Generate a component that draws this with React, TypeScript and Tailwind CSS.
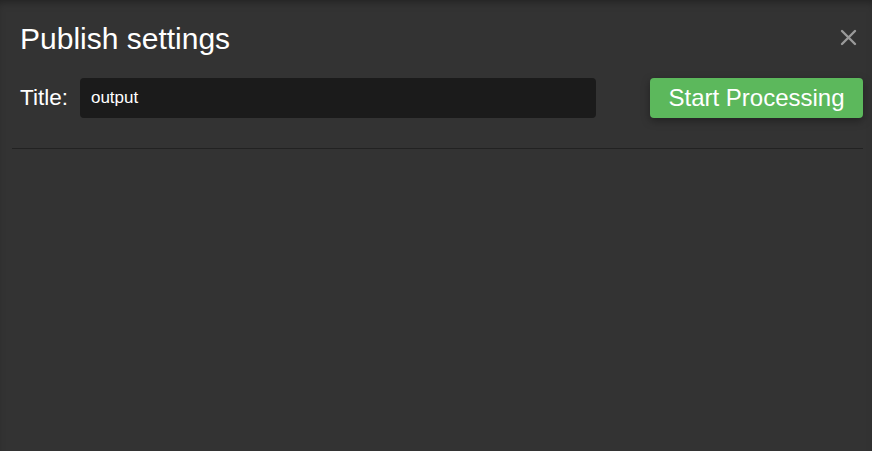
export default function App() {
  return (
    <div
      className="h-[451px] w-[872px] overflow-hidden bg-[#333333] shadow-[inset_0_6px_8px_-4px_rgba(0,0,0,0.35)]"
      style={{ fontFamily: '"Liberation Sans", Arial, sans-serif' }}
    >
      <div className="flex items-start justify-between pl-5 pr-[15px] pt-5">
        <h1 className="text-[30px] leading-[38px] text-white">Publish settings</h1>
        <button className="mt-[9px] flex h-[17px] w-[17px] items-center justify-center text-[#9a9a9a]">
          <svg viewBox="0 0 17 17" className="h-[17px] w-[17px]" stroke="currentColor" strokeWidth="2.4" strokeLinecap="round">
            <path d="M2 2 L15 15 M15 2 L2 15" />
          </svg>
        </button>
      </div>

      <div className="mt-5 flex items-center pl-5 pr-[9px]">
        <label className="text-[22.5px] text-white">Title:</label>
        <input
          defaultValue="output"
          className="ml-3 h-10 w-[516px] rounded bg-[#1b1b1b] px-[11px] text-[17px] text-white outline-none"
        />
        <button className="ml-auto h-10 w-[213px] rounded bg-[#5cb85c] text-[24px] text-white shadow-[0_3px_8px_rgba(0,0,0,0.35)]">
          Start Processing
        </button>
      </div>

      <div className="ml-3 mr-[9px] mt-[30px] h-px bg-[#222222]" />
    </div>
  );
}
